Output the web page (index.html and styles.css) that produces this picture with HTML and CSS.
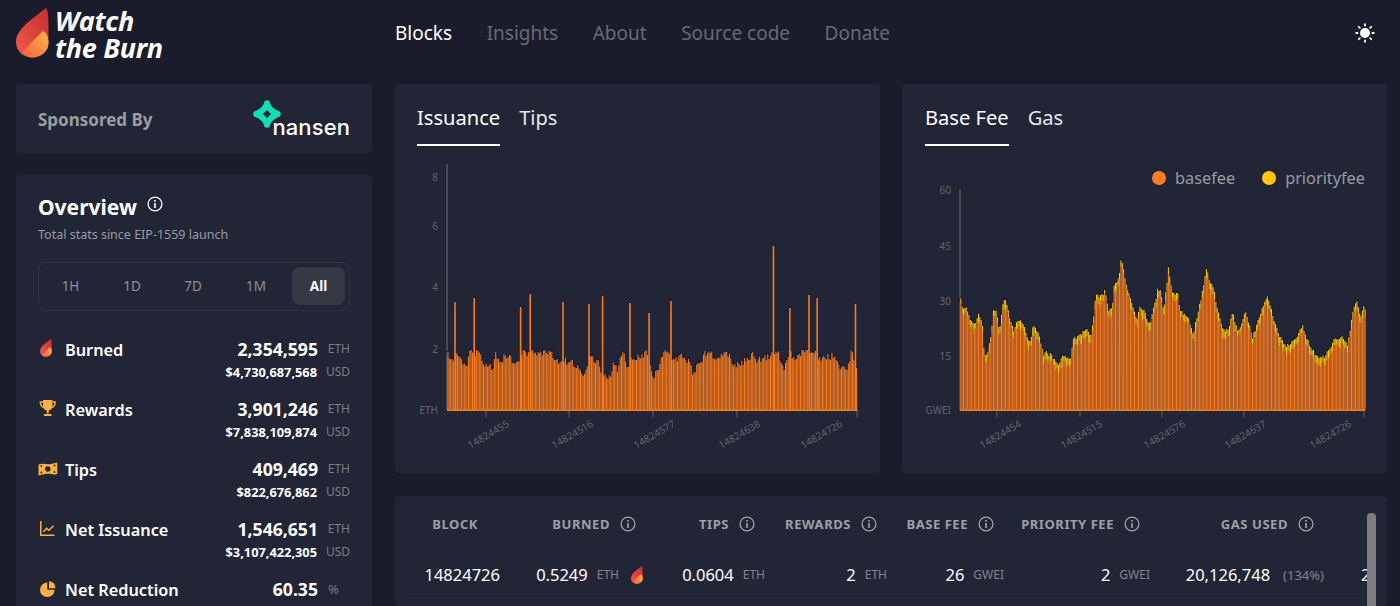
FILE: index.html
```html
<!DOCTYPE html>
<html lang="en">
<head>
<meta charset="utf-8">
<title>Watch the Burn</title>
<link rel="stylesheet" href="styles.css">
<script src="chart.js" defer></script>
</head>
<body>
<svg class="defs" width="0" height="0" aria-hidden="true">
  <defs>
    <linearGradient id="flameOuter" x1="1" y1="0" x2="0" y2="1">
      <stop offset="0" stop-color="#c42f2f"/><stop offset="1" stop-color="#f4594b"/>
    </linearGradient>
    <linearGradient id="flameInner" x1="1" y1="0" x2="0" y2="1">
      <stop offset="0" stop-color="#ffb845"/><stop offset="1" stop-color="#f45f41"/>
    </linearGradient>
    <symbol id="flame" viewBox="0 0 33 50">
      <path fill="url(#flameOuter)" d="M30 0C32 1 32.5 8 32.5 22V35C32.5 43 25 49.5 16.5 49.5 7 49.5 0 43 0 34 0 27 4 22 10 16 18 9 25 4 30 0Z"/>
      <path fill="url(#flameInner)" d="M6 44 27 23C31 25 32.5 30 32.5 35 32.5 43 25 49.5 16.5 49.5 12 49.5 9 47.5 6 44Z"/>
    </symbol>
    <symbol id="info" viewBox="0 0 16 16">
      <circle cx="8" cy="8" r="6.9" fill="none" stroke="currentColor" stroke-width="1.3"/>
      <rect x="7.2" y="7" width="1.6" height="5" fill="currentColor"/>
      <rect x="7.2" y="4" width="1.6" height="1.7" fill="currentColor"/>
    </symbol>
  </defs>
</svg>

<header class="top">
  <a class="logo">
    <svg class="logo-mark" viewBox="0 0 33 50"><use href="#flame"/></svg>
    <span class="logo-text">Watch<br>the Burn</span>
  </a>
  <nav class="nav">
    <a class="nav-link nav-active">Blocks</a>
    <a class="nav-link">Insights</a>
    <a class="nav-link">About</a>
    <a class="nav-link">Source code</a>
    <a class="nav-link">Donate</a>
    <svg class="sun" viewBox="0 0 20 20">
      <circle cx="10" cy="10" r="5" fill="#fff"/>
      <g stroke="#fff" stroke-width="1.8" stroke-linecap="round">
        <path d="M10 1.2V2.6M10 17.4V18.8M1.2 10H2.6M17.4 10H18.8M3.8 3.8 4.8 4.8M15.2 15.2 16.2 16.2M3.8 16.2 4.8 15.2M15.2 4.8 16.2 3.8"/>
      </g>
    </svg>
  </nav>
</header>

<main class="layout">
  <aside class="side">
    <section class="card sponsor">
      <span class="sponsor-label">Sponsored By</span>
      <span class="nansen">
        <svg class="nansen-star" viewBox="0 0 28 28">
          <path fill="#14dcb4" fill-rule="evenodd" d="M11.500 1C13 0 15 0 16.500 1 17.500 5.500 20 9 27 11.500 28 13 28 15 27 16.500 20 19 17.500 22.500 16.500 27 15 28 13 28 11.500 27 10.500 22.500 8 19 1 16.500 0 15 0 13 1 11.500 8 9 10.500 5.500 11.500 1ZM14 10 10 14 14 18 18 14Z"/>
        </svg>
        <span class="nansen-word">nansen</span>
      </span>
    </section>

    <section class="card overview">
      <h2 class="overview-title">Overview <svg class="info info-white"><use href="#info"/></svg></h2>
      <p class="overview-sub">Total stats since EIP-1559 launch</p>
      <div class="ranges">
        <span class="range">1H</span>
        <span class="range">1D</span>
        <span class="range">7D</span>
        <span class="range">1M</span>
        <span class="range range-active">All</span>
      </div>

      <div class="stat">
        <svg class="stat-icon" viewBox="0 0 20 20"><use href="#flame" x="2" y="0" width="12" height="18"/></svg>
        <span class="stat-name">Burned</span>
        <div class="stat-vals">
          <div class="stat-line"><b class="big">2,354,595</b><span class="unit">ETH</span></div>
          <div class="stat-line"><b class="small">$4,730,687,568</b><span class="unit">USD</span></div>
        </div>
      </div>
      <div class="stat">
        <svg class="stat-icon" viewBox="0 0 20 20" fill="#fbb040">
          <path d="M5 1H14.500V6.500C14.500 9.500 12.500 11.500 9.750 11.500S5 9.500 5 6.500Z"/>
          <path d="M5 3H2.300C2.300 6 3.300 8 6 8.600M14.500 3H17.200C17.200 6 16.200 8 13.500 8.600" fill="none" stroke="#fbb040" stroke-width="1.400"/>
          <path d="M8.800 11H10.700V14.500H8.800ZM6 15H13.500V17H6Z"/>
        </svg>
        <span class="stat-name">Rewards</span>
        <div class="stat-vals">
          <div class="stat-line"><b class="big">3,901,246</b><span class="unit">ETH</span></div>
          <div class="stat-line"><b class="small">$7,838,109,874</b><span class="unit">USD</span></div>
        </div>
      </div>
      <div class="stat">
        <svg class="stat-icon" viewBox="0 0 20 20" fill="#fbb040">
          <path d="M.5 5.500C5 3.500 9 6 13 5 15 4.500 17 4 19.300 3.500V15C15 16.500 11 14 7 15 4 15.700 2 16 .5 16.500Z"/>
          <circle cx="9.800" cy="10" r="2.700" fill="#222535"/>
          <circle cx="3.300" cy="7" r=".9" fill="#222535"/>
          <circle cx="3.300" cy="13.500" r=".9" fill="#222535"/>
          <circle cx="16.500" cy="6.500" r=".9" fill="#222535"/>
          <circle cx="16.500" cy="13" r=".9" fill="#222535"/>
        </svg>
        <span class="stat-name">Tips</span>
        <div class="stat-vals">
          <div class="stat-line"><b class="big">409,469</b><span class="unit">ETH</span></div>
          <div class="stat-line"><b class="small">$822,676,862</b><span class="unit">USD</span></div>
        </div>
      </div>
      <div class="stat">
        <svg class="stat-icon" viewBox="0 0 20 20" fill="none" stroke="#fbb040">
          <path d="M2.800 2V16.200H16.500" stroke-width="1.500"/>
          <path d="M5.500 12.800 8.500 9.300 11 11.300 15.500 6.800" stroke-width="1.500"/>
        </svg>
        <span class="stat-name">Net Issuance</span>
        <div class="stat-vals">
          <div class="stat-line"><b class="big">1,546,651</b><span class="unit">ETH</span></div>
          <div class="stat-line"><b class="small">$3,107,422,305</b><span class="unit">USD</span></div>
        </div>
      </div>
      <div class="stat">
        <svg class="stat-icon" viewBox="0 0 20 20" fill="#fbb040">
          <path d="M9.300 3.500A7.300 7.300 0 1 0 16.600 10.800H9.300Z"/>
          <path d="M11 2.200V9.200H17.500A6.800 6.800 0 0 0 11 2.200Z"/>
        </svg>
        <span class="stat-name">Net Reduction</span>
        <div class="stat-vals">
          <div class="stat-line"><b class="big">60.35</b><span class="unit unit-left">%</span></div>
        </div>
      </div>
    </section>
  </aside>

  <div class="content">
    <div class="charts">
      <section class="card chart-card">
        <div class="tabs">
          <span class="tab tab-active">Issuance</span>
          <span class="tab">Tips</span>
        </div>
        <svg class="chart" id="issuance" viewBox="395 146 485 327">
          <line class="axis" x1="447" y1="164" x2="447" y2="410"/>
          <g class="bars"></g>
          <line class="baseline" x1="447" y1="410.200" x2="857.500" y2="410.200"/>
          <path class="tick" d="M486 411V417M569 411V417M653 411V417M737 411V417M857 411V417"/>
          <g class="ylabel">
            <text x="438" y="181">8</text>
            <text x="438" y="230">6</text>
            <text x="438" y="291">4</text>
            <text x="438" y="353">2</text>
            <text x="438" y="414">ETH</text>
          </g>
          <g class="xlabel">
            <text transform="translate(510 426) rotate(-30)">14824455</text>
            <text transform="translate(594 426) rotate(-30)">14824516</text>
            <text transform="translate(676 426) rotate(-30)">14824577</text>
            <text transform="translate(761 426) rotate(-30)">14824638</text>
            <text transform="translate(843 426) rotate(-30)">14824726</text>
          </g>
        </svg>
      </section>

      <section class="card chart-card">
        <div class="tabs tabs-fee">
          <span class="tab tab-active">Base Fee</span>
          <span class="tab">Gas</span>
        </div>
        <div class="legend">
          <span class="legend-item"><i class="dot dot-base"></i>basefee</span>
          <span class="legend-item"><i class="dot dot-priority"></i>priorityfee</span>
        </div>
        <svg class="chart" id="fees" viewBox="902 146 485 327">
          <line class="axis" x1="960" y1="190" x2="960" y2="410"/>
          <g class="bars"></g>
          <line class="baseline" x1="960" y1="410.200" x2="1365" y2="410.200"/>
          <path class="tick" d="M997 411V417M1080 411V417M1162 411V417M1244 411V417M1364 411V417"/>
          <g class="ylabel">
            <text x="951" y="194">60</text>
            <text x="951" y="250">45</text>
            <text x="951" y="305">30</text>
            <text x="951" y="360">15</text>
            <text x="951" y="414">GWEI</text>
          </g>
          <g class="xlabel">
            <text transform="translate(1022 426) rotate(-30)">14824454</text>
            <text transform="translate(1103 426) rotate(-30)">14824515</text>
            <text transform="translate(1186 426) rotate(-30)">14824576</text>
            <text transform="translate(1267 426) rotate(-30)">14824637</text>
            <text transform="translate(1352 426) rotate(-30)">14824726</text>
          </g>
        </svg>
      </section>
    </div>

    <section class="card blocks">
      <div class="blocks-table">
        <div class="grid grid-head">
          <span class="th th-block">BLOCK</span>
          <span class="th th-burned">BURNED <svg class="info"><use href="#info"/></svg></span>
          <span class="th">TIPS <svg class="info"><use href="#info"/></svg></span>
          <span class="th">REWARDS <svg class="info"><use href="#info"/></svg></span>
          <span class="th">BASE FEE <svg class="info"><use href="#info"/></svg></span>
          <span class="th">PRIORITY FEE <svg class="info"><use href="#info"/></svg></span>
          <span class="th">GAS USED <svg class="info"><use href="#info"/></svg></span>
          <span class="th"></span>
        </div>
        <div class="grid grid-row">
          <span class="td">14824726</span>
          <span class="td">0.5249<em class="unit">ETH</em><svg class="burn-icon" viewBox="0 0 33 50"><use href="#flame"/></svg></span>
          <span class="td">0.0604<em class="unit">ETH</em></span>
          <span class="td">2<em class="unit">ETH</em></span>
          <span class="td">26<em class="unit">GWEI</em></span>
          <span class="td">2<em class="unit">GWEI</em></span>
          <span class="td">20,126,748<em class="unit unit-wide">(134%)</em></span>
          <span class="td td-last">2</span>
        </div>
      </div>
      <div class="scrollbar"></div>
    </section>
  </div>
</main>
</body>
</html>
```
FILE: styles.css
```css
* { box-sizing: border-box; }
html, body { margin: 0; height: 606px; overflow: hidden; }
body {
  background: #1a1c2b;
  color: #fff;
  font-family: "Noto Sans", "Open Sans", sans-serif;
  padding: 0 13px 0 16px;
}
.defs { position: absolute; }

.top { display: grid; grid-template-columns: 356px 1fr; column-gap: 23px; height: 84px; }
.logo { display: flex; align-items: flex-start; padding-top: 8px; }
.logo-mark { width: 33px; height: 50px; flex: none; }
.logo-text {
  margin: -1px 0 0 6px;
  font: italic 700 27px/27px "Open Sans", sans-serif;
  letter-spacing: -.3px;
  color: #fff;
}
.nav { display: flex; align-items: center; gap: 34.500px; height: 66px; font-size: 19px; }
.nav-link { color: #676975; }
.nav-active { color: #fff; }
.sun { width: 20px; height: 20px; margin-left: auto; margin-right: 12px; }

.layout { display: grid; grid-template-columns: 356px 1fr; column-gap: 23px; align-items: start; }
.side { display: flex; flex-direction: column; gap: 22px; }
.content { display: flex; flex-direction: column; gap: 23px; }
.card { background: #222535; border-radius: 4px; }

.sponsor { height: 69px; display: flex; align-items: center; justify-content: space-between; padding: 0 22px; }
.sponsor-label { font-size: 17px; font-weight: 700; color: #9b9da3; padding-top: 2px; }
.nansen { position: relative; width: 97px; height: 36px; margin-top: -1px; }
.nansen-star { position: absolute; left: 0; top: 0; width: 28px; height: 28px; }
.nansen-word {
  position: absolute; right: 0; bottom: -6px;
  font: 500 22px/30px Inter, sans-serif;
  letter-spacing: .1px;
  color: #fff;
}

.overview { padding: 17px 22px 0; height: 600px; }
.overview-title { display: flex; align-items: center; gap: 10px; margin: 0; font-size: 21px; line-height: 30px; font-weight: 700; }
.info { width: 16px; height: 16px; color: #a3a5ab; flex: none; }
.info-white { color: #fff; margin-top: -6px; }
.overview-sub { margin: 4px 0 0; font-size: 12.500px; line-height: 18px; color: #9a9ca5; }
.ranges {
  display: grid; grid-template-columns: 59px 64px 58px 68px 55px;
  align-items: center;
  height: 49px; margin-top: 18px;
  padding: 0 0 1px 2px;
  border: 1px solid #30333f; border-radius: 8px;
}
.range { text-align: center; font-size: 13.500px; color: #8e9099; }
.range-active { height: 38px; line-height: 38px; background: #353845; border-radius: 8px; color: #fff; font-weight: 700; margin-left: 2px; }

.stat { display: flex; height: 60px; }
.ranges + .stat { margin-top: 27px; }
.stat-icon { width: 20px; height: 20px; flex: none; margin-top: 1px; margin-right: 7px; }
.stat-name { font-size: 16.300px; font-weight: 600; line-height: 24px; }
.stat-vals { margin-left: auto; text-align: right; margin-top: -1px; }
.stat-line { display: flex; justify-content: flex-end; align-items: center; }
.big { font-size: 17.600px; font-weight: 700; line-height: 24px; }
.small { font-size: 12.800px; font-weight: 700; line-height: 22px; padding-right: 1px; }
.unit { width: 32px; text-align: right; font-size: 12px; font-style: normal; color: #7a7c86; flex: none; margin-top: -1px; }
.unit-left { text-align: left; padding-left: 10px; font-size: 13px; }

.charts { display: grid; grid-template-columns: 485px 485px; column-gap: 22px; }
.chart-card { position: relative; height: 389px; }
.tabs { display: flex; gap: 19px; height: 62px; padding: 19px 0 0 22px; }
.tabs-fee { padding-left: 23px; }
.tab { height: 43px; font-size: 20.100px; line-height: 30px; color: #e6e7ea; }
.tab-active { color: #fff; border-bottom: 2px solid #fff; }
.chart { display: block; width: 485px; height: 327px; }
.axis { stroke: #55575f; stroke-width: 1.500; }
.baseline { stroke: #f47c20; stroke-width: 1.400; }
.tick { stroke: #565860; stroke-width: 1.200; fill: none; }
.ylabel text { font-size: 10px; fill: #62646e; text-anchor: end; }
.xlabel text { font-size: 10px; fill: #62646e; text-anchor: end; }
.bar-halo { fill: #151d38; }
.bar-main { fill: #fa7a1e; }
.bar-top { fill: #ffc60a; }

.legend { position: absolute; top: 82px; right: 22px; display: flex; gap: 27px; font-size: 16.300px; line-height: 24px; color: #979ca6; }
.legend-item { display: flex; align-items: center; gap: 9px; }
.dot { width: 14px; height: 14px; border-radius: 50%; }
.dot-base { background: #ff7d24; }
.dot-priority { background: #ffc60a; }

.blocks { display: flex; height: 110px; padding-right: 11px; }
.blocks-table { width: 961px; margin-left: 11px; overflow: hidden; }
.grid { display: grid; grid-template-columns: 94px 143px 122px 122px 117px 146px 174px 43px; }
.grid-head { height: 54px; padding-top: 3px; align-items: center; border-bottom: 1px solid #292a35; }
.grid-row { height: 49px; padding-top: 1px; align-items: center; border-bottom: 1px solid #292a35; }
.th {
  display: flex; align-items: center; justify-content: flex-end; gap: 10px;
  padding-right: 10px;
  font-size: 13px; font-weight: 700; letter-spacing: .55px; color: #9d9fa6;
}
.th-block { padding-right: 22px; }
.th-burned { padding-right: 7px; }
.td { display: flex; align-items: center; justify-content: flex-end; font-size: 16.500px; color: #fff; }
.td .unit { width: auto; margin-left: 9px; margin-top: 0; color: #82848e; }
.td .unit-wide { margin-left: 13px; font-size: 13px; }
.burn-icon { width: 12px; height: 18px; margin-left: 12px; }
.td-last { justify-content: flex-start; padding-left: 37px; white-space: nowrap; }
.scrollbar { width: 9px; height: 110px; margin-top: 17px; background: #7d7d81; border-radius: 4px; }
```
FILE: chart.js
```js
(function () {
  var NS = "http://www.w3.org/2000/svg";
  function rng(seed) {
    return function () {
      seed |= 0; seed = seed + 0x6D2B79F5 | 0;
      var t = Math.imul(seed ^ seed >>> 15, 1 | seed);
      t = t + Math.imul(t ^ t >>> 7, 61 | t) ^ t;
      return ((t ^ t >>> 14) >>> 0) / 4294967296;
    };
  }
  function interp(env, x) {
    for (var i = 1; i < env.length; i++) {
      if (x <= env[i][0]) {
        var a = env[i - 1], b = env[i];
        return a[1] + (b[1] - a[1]) * (x - a[0]) / (b[0] - a[0]);
      }
    }
    return env[env.length - 1][1];
  }
  function addPath(group, cls, d) {
    var p = document.createElementNS(NS, "path");
    p.setAttribute("class", cls);
    p.setAttribute("d", d);
    group.appendChild(p);
  }
  function rect(x, y, w, h) {
    return "M" + x.toFixed(2) + " " + y.toFixed(2) + "h" + w.toFixed(2) + "v" + h.toFixed(2) + "h" + (-w).toFixed(2) + "Z";
  }

  var BASE = 410;

  // Issuance chart: top of each bar in page pixels
  var env1 = [[447,351],[449,360],[453,358],[458,356],[462,362],[466,366],[470,353],[474,358],[478,351],[483,362],[488,368],[491,371],[495,356],[500,364],[505,354],[510,362],[516,365],[522,354],[527,352],[535,354],[545,354],[552,355],[558,361],[565,363],[572,366],[578,370],[584,372],[592,355],[598,366],[604,374],[610,381],[613,362],[617,372],[622,354],[627,365],[632,358],[640,360],[647,353],[652,372],[657,375],[661,358],[668,355],[672,362],[680,356],[688,364],[693,377],[698,362],[705,356],[715,358],[722,354],[730,360],[738,366],[745,360],[752,352],[756,368],[762,358],[770,358],[778,356],[783,368],[790,352],[795,362],[805,352],[815,352],[822,362],[832,355],[838,362],[843,370],[848,368],[851,352],[855,365],[858,365]];
  var spikes1 = [[454,302],[473,298],[520,307],[529.5,294],[562.7,302],[588,304],[602,296],[629.5,303],[648.5,313],[670.5,301],[773,246],[789.5,308],[808.7,295],[816,298],[817,298],[855,304]];

  (function () {
    var g = document.querySelector("#issuance .bars");
    var r = rng(11), walk = 0, halo = "", main = "";
    var step = 1.3667, w = 1.05;
    for (var i = 0; i < 300; i++) {
      var x = 447.4 + i * step;
      walk = walk * 0.35 + (r() - 0.5) * 9;
      var top = Math.max(350, interp(env1, x) + walk - 1);
      var bw = w;
      for (var s = 0; s < spikes1.length; s++) {
        if (Math.abs(spikes1[s][0] - x) <= step / 2) { top = spikes1[s][1]; bw = 1.6; }
      }
      halo += rect(x - 0.9, top - 1.2, bw + 1.8, 5);
      main += rect(x, top, bw, BASE - top);
    }
    addPath(g, "bar-halo", halo);
    addPath(g, "bar-main", main);
  })();

  // Fee chart: top of the priority fee in page pixels
  var env2 = [[960,298],[962,310],[966,309],[970,318],[975,322],[978,316],[982,326],[984,355],[987,351],[990,340],[993,310],[996,312],[999,330],[1003,302],[1006,302],[1010,320],[1013,330],[1018,320],[1023,324],[1028,338],[1030,342],[1033,323],[1038,335],[1043,353],[1050,355],[1057,363],[1060,360],[1065,355],[1070,357],[1073,338],[1080,335],[1085,327],[1090,335],[1093,322],[1095,297],[1100,295],[1105,290],[1108,312],[1112,305],[1113,285],[1118,280],[1121,256],[1124,275],[1127,290],[1130,302],[1134,310],[1136,320],[1140,308],[1144,310],[1148,322],[1150,322],[1157,290],[1160,290],[1163,313],[1168,268],[1172,293],[1177,293],[1180,313],[1187,317],[1193,332],[1197,313],[1200,303],[1206,268],[1210,283],[1213,290],[1218,313],[1222,327],[1227,330],[1232,313],[1238,333],[1245,313],[1252,337],[1257,322],[1262,305],[1268,298],[1273,320],[1278,332],[1285,347],[1293,343],[1302,325],[1308,343],[1317,358],[1325,358],[1333,340],[1342,338],[1347,347],[1353,310],[1357,303],[1360,315],[1363,308],[1366,308]];

  (function () {
    var g = document.querySelector("#fees .bars");
    var r = rng(29), walk = 0, halo = "", main = "", topper = "";
    var step = 1.3567, w = 1.05;
    for (var i = 0; i < 299; i++) {
      var x = 960.3 + i * step;
      walk = walk * 0.4 + (r() - 0.5) * 5;
      var top = interp(env2, x) + walk;
      var cap = 4 + r() * 6;
      halo += rect(x - 0.9, top - 1.2, w + 1.8, 5);
      topper += rect(x, top, w, cap + 0.5);
      main += rect(x, top + cap, w, BASE - top - cap);
    }
    addPath(g, "bar-halo", halo);
    addPath(g, "bar-top", topper);
    addPath(g, "bar-main", main);
  })();
})();
```
